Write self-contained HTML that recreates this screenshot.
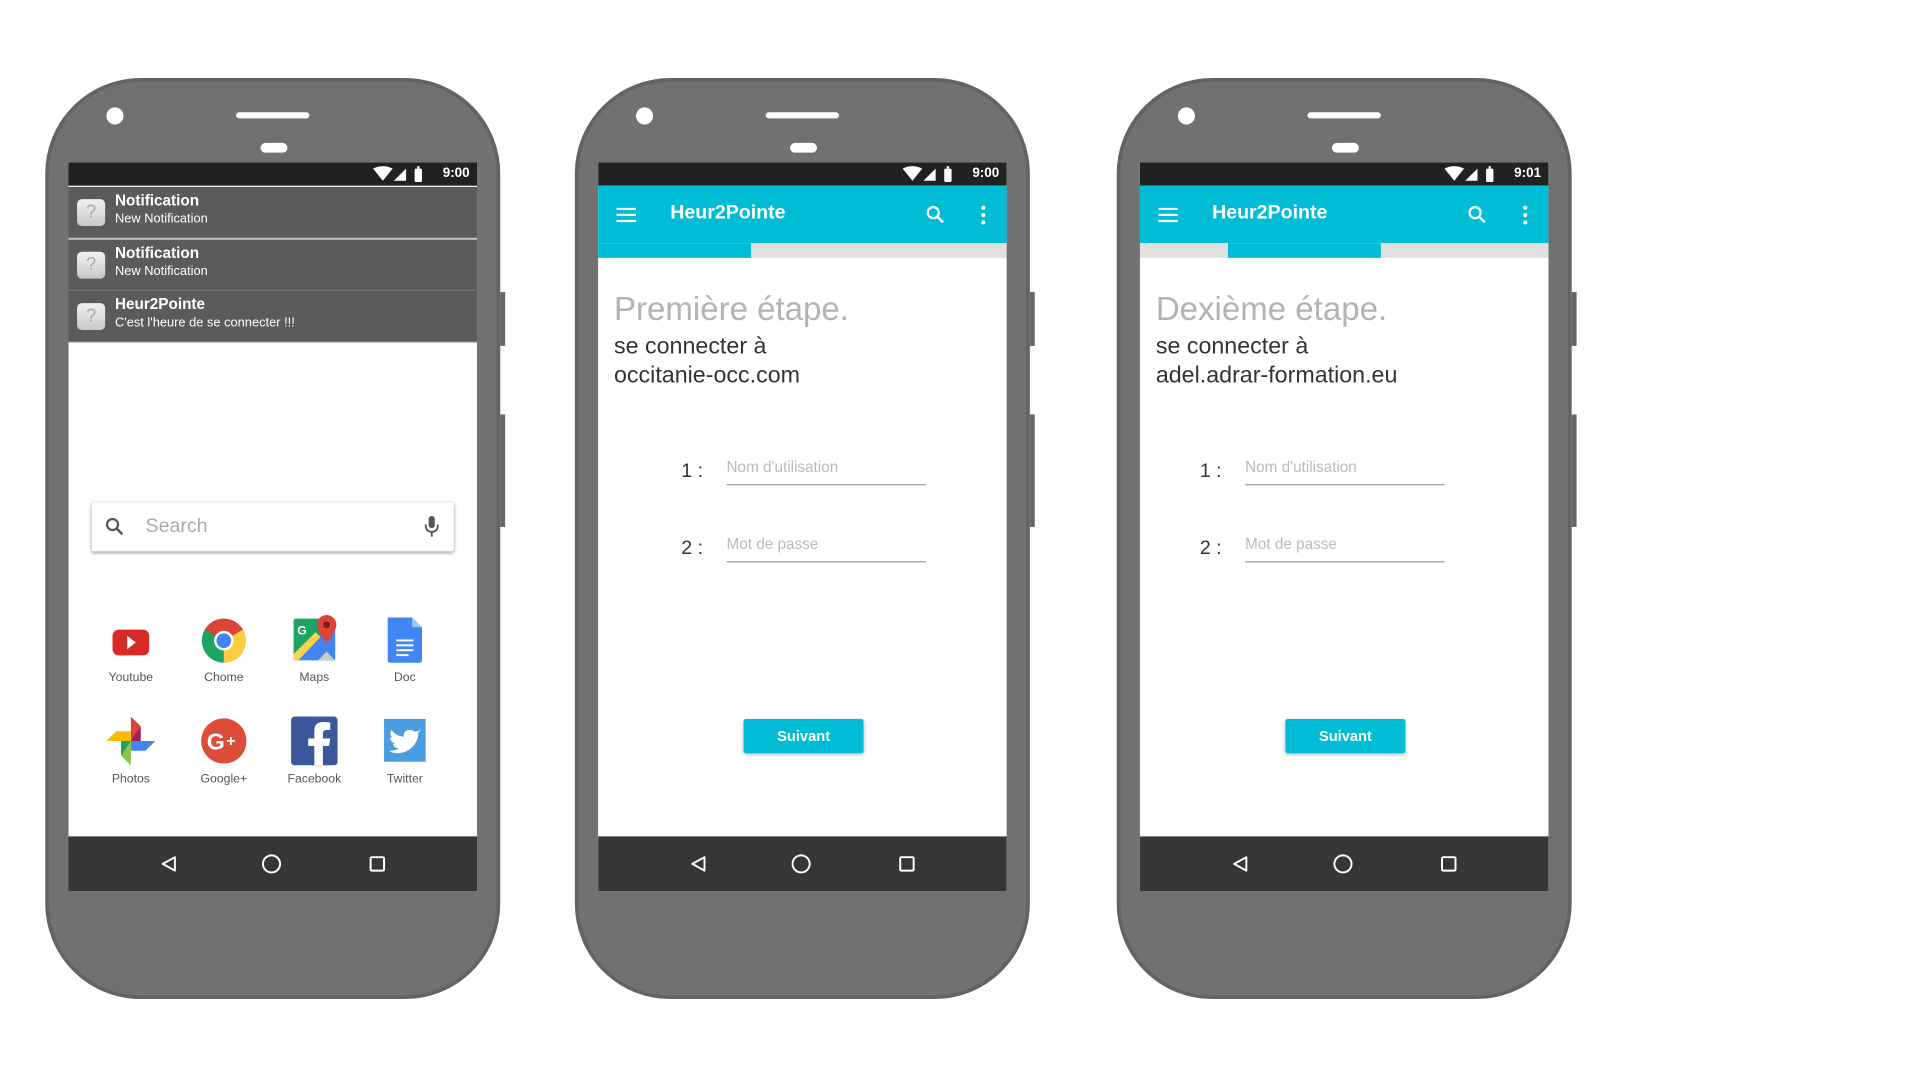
<!DOCTYPE html>
<html><head><meta charset="utf-8"><style>
*{margin:0;padding:0;box-sizing:border-box}
html,body{width:1920px;height:1080px;background:#fff;overflow:hidden;font-family:"Liberation Sans",sans-serif}
#w{position:absolute;left:0;top:1px;width:1570px;height:883px;transform:scale(1.2231);transform-origin:0 0}
.ph{position:absolute;top:63px;width:372px;height:753px;background:#717171;border:3px solid #636363;border-radius:78px}
.btn1,.btn2{position:absolute;left:369px;width:4px;background:#666}
.btn1{top:172px;height:44px}.btn2{top:272px;height:92px}
.cam{position:absolute;left:47px;top:21px;width:14px;height:14px;border-radius:50%;background:#fff}
.spk{position:absolute;left:153px;top:25px;width:60px;height:5px;border-radius:3px;background:#fff}
.pill{position:absolute;left:173px;top:50px;width:22px;height:8px;border-radius:4px;background:#fff}
.scr{position:absolute;left:16px;top:66px;width:334px;height:596px;background:#fff;overflow:hidden}
.sb{position:absolute;left:0;top:0;width:334px;height:19px;background:#212121;color:#fff;font-size:11px;font-weight:bold}
.sb .t{position:absolute;right:6px;top:3px}
.sb svg{position:absolute;right:35px;top:3px}
.nav{position:absolute;left:0;top:551px;width:334px;height:45px;background:#363636}
.nav svg{position:absolute;left:0;top:0}
.nt{position:absolute;left:0;width:334px;height:42px;background:#5b5b5b;border-bottom:1px solid #777;color:#fff}
.nt .ic{position:absolute;left:7px;top:10px;width:23px;height:22px;border-radius:4px;background:linear-gradient(#f2f2f2,#c8c8c8);color:#aaa;font-size:15px;text-align:center;line-height:22px}
.nt b{position:absolute;left:38px;top:4px;font-size:12.5px}
.nt span{position:absolute;left:38px;top:20px;font-size:10.5px}
.srch{position:absolute;left:19px;top:278px;width:296px;height:40px;background:#fff;border-radius:2px;box-shadow:0 1px 3px rgba(0,0,0,.4)}
.srch span{position:absolute;left:44px;top:11px;font-size:16px;color:#aaa}
.ap{position:absolute;width:70px;text-align:center;font-size:10px;color:#555}
.ap svg{display:block;margin:0 auto 6px}
.tb{position:absolute;left:0;top:19px;width:334px;height:47px;background:#00bcd4;color:#fff}
.tb b{position:absolute;left:59px;top:14px;font-size:16px}
.tab{position:absolute;top:66px;width:334px;height:12px;background:#e0e0e0}
.ind{position:absolute;top:0;width:125px;height:12px;background:#00bcd4}
.h1{position:absolute;left:13px;top:104px;font-size:27px;color:#b3b3b3;line-height:32px;white-space:nowrap}
.h2{position:absolute;left:13px;top:139px;font-size:19px;color:#333;line-height:24px;white-space:nowrap}
.lb{position:absolute;left:68px;font-size:16px;color:#333}
.in{position:absolute;left:105px;width:163px;height:1px;background:#999}
.ph2{position:absolute;left:105px;font-size:12.5px;color:#bbb}
.p3 .lb{left:49px}.p3 .in,.p3 .ph2{left:86px}
.sv{position:absolute;left:119px;top:455px;width:98px;height:28px;background:#00bcd4;color:#fff;font-weight:bold;font-size:12px;text-align:center;line-height:28px;border-radius:2px;box-shadow:0 1px 3px rgba(0,0,0,.3)}
</style></head><body><div id="w">

<!-- phone 1 -->
<div class="ph" style="left:37px">
<div class="btn1"></div><div class="btn2"></div>
<div class="cam"></div><div class="spk"></div><div class="pill"></div>
<div class="scr">
 <div class="sb"><svg width="50" height="13" viewBox="0 0 50 13"><path d="M0 2 Q8 -2 16 2 L8 12Z" fill="#fff"/><path d="M17 12 L27 2 L27 12Z" fill="#fff"/><rect x="34" y="2" width="6" height="11" rx="1" fill="#fff"/><rect x="36" y="0" width="2" height="2" fill="#fff"/></svg><span class="t">9:00</span></div>
 <div class="nt" style="top:20px"><div class="ic">?</div><b>Notification</b><span>New Notification</span></div>
 <div class="nt" style="top:63px"><div class="ic">?</div><b>Notification</b><span>New Notification</span></div>
 <div class="nt" style="top:105px"><div class="ic">?</div><b>Heur2Pointe</b><span>C'est l'heure de se connecter !!!</span></div>
 <div class="srch"><svg style="position:absolute;left:11px;top:12px" width="16" height="16" viewBox="0 0 16 16"><circle cx="6" cy="6" r="4.5" stroke="#555" stroke-width="1.8" fill="none"/><path d="M9.5 9.5 L14 14" stroke="#555" stroke-width="2"/></svg><span>Search</span><svg style="position:absolute;left:272px;top:11px" width="12" height="18" viewBox="0 0 12 18"><rect x="3.5" y="0" width="5" height="10" rx="2.5" fill="#555"/><path d="M1 7 Q1 13 6 13 Q11 13 11 7" stroke="#555" stroke-width="1.5" fill="none"/><rect x="5.2" y="13" width="1.6" height="4" fill="#555"/></svg></div>
 <div class="ap" style="left:16px;top:370px"><svg width="32" height="40" viewBox="0 0 32 40"><rect x="1" y="12" width="30" height="21" rx="5" fill="#d62b26"/><path d="M13 17 L20 22.5 L13 28Z" fill="#fff"/></svg>Youtube</div>
 <div class="ap" style="left:92px;top:370px"><svg width="38" height="40" viewBox="0 0 38 40"><circle cx="19" cy="21" r="18" fill="#1da462"/><path d="M19 21 L3.4 12 A18 18 0 0 1 34.6 12Z" fill="#db4437"/><path d="M19 21 L34.6 12 A18 18 0 0 1 19 39Z" fill="#ffcd40"/><circle cx="19" cy="21" r="8" fill="#fff"/><circle cx="19" cy="21" r="6" fill="#4285f4"/></svg>Chome</div>
 <div class="ap" style="left:166px;top:370px"><svg width="38" height="40" viewBox="0 0 38 40"><rect x="2" y="3" width="34" height="34" rx="2" fill="#1da462"/><path d="M2 37 L36 5 L36 37Z" fill="#4285f4"/><path d="M2 32 L20 14 L24 18 L6 37 L2 37Z" fill="#ffd04b"/><path d="M22 37 L29 30 L36 37Z" fill="#ccc"/><text x="5" y="16" font-size="10" font-weight="bold" fill="#fff" font-family="Liberation Sans">G</text><path d="M29 0 A8 8 0 0 1 37 8 C37 14 29 22 29 24 C29 22 21 14 21 8 A8 8 0 0 1 29 0Z" fill="#db4437"/><circle cx="29" cy="8" r="2.8" fill="#7a1d18"/></svg>Maps</div>
 <div class="ap" style="left:240px;top:370px"><svg width="34" height="40" viewBox="0 0 34 40"><path d="M3 2 H23 L31 10 V37 Q31 39 29 39 H5 Q3 39 3 37Z" fill="#4285f4"/><path d="M23 2 L31 10 H23Z" fill="#a1c2fa"/><rect x="10" y="20" width="14" height="1.6" fill="#fff"/><rect x="10" y="24" width="14" height="1.6" fill="#fff"/><rect x="10" y="28" width="14" height="1.6" fill="#fff"/><rect x="10" y="32" width="10" height="1.6" fill="#fff"/></svg>Doc</div>
 <div class="ap" style="left:16px;top:453px"><svg width="40" height="40" viewBox="0 0 40 40"><path d="M20 20 L20 0 L28 8 L28 20Z" fill="#db4437"/><path d="M20 20 L40 20 L32 28 L20 28Z" fill="#4285f4"/><path d="M20 20 L20 40 L12 32 L12 20Z" fill="#8bc34a"/><path d="M20 20 L0 20 L8 12 L20 12Z" fill="#fbbc05"/><path d="M20 20 L28 8 L28 20Z" fill="#a51c5a"/><path d="M20 20 L12 20 L12 32Z" fill="#1da462"/></svg>Photos</div>
 <div class="ap" style="left:92px;top:453px"><svg width="38" height="40" viewBox="0 0 38 40"><circle cx="19" cy="20" r="18.5" fill="#dd4b39"/><text x="5" y="27" font-size="19" font-weight="bold" fill="#fff" font-family="Liberation Sans">G</text><text x="21" y="24" font-size="13" font-weight="bold" fill="#fff" font-family="Liberation Sans">+</text></svg>Google+</div>
 <div class="ap" style="left:166px;top:453px"><svg width="40" height="40" viewBox="0 0 40 40"><rect x="1" y="0" width="38" height="40" rx="3" fill="#3b5998"/><path d="M27 40 V24 H32 L33 18 H27 V14 Q27 11 30 11 H33 V5 Q30 4.5 27 4.5 Q20 4.5 20 12 V18 H15 V24 H20 V40Z" fill="#fff"/></svg>Facebook</div>
 <div class="ap" style="left:240px;top:453px"><svg width="36" height="40" viewBox="0 0 36 40"><rect x="1" y="2" width="34" height="35" fill="#4a9ee0"/><path d="M28 12 Q30 12 31 10 Q30 13 29 13 C29 23 21 30 12 30 Q8 30 5 28 Q10 28 13 26 Q9 26 8 22 Q9 22.5 10 22 Q6 21 6 17 Q7 17.5 8 17.5 Q5 15 7 11 Q11 16 17 16.5 Q17 11 22 11 Q25 11 26 12.5Z" fill="#fff"/></svg>Twitter</div>
 <div class="nav"><svg width="334" height="45"><path d="M87 17 L77 22.5 L87 28Z" stroke="#fff" stroke-width="1.6" fill="none" stroke-linejoin="round"/><circle cx="166" cy="22.5" r="7" stroke="#fff" stroke-width="1.6" fill="none"/><rect x="247" y="17" width="11" height="11" rx="1" stroke="#fff" stroke-width="1.6" fill="none"/></svg></div>
</div></div>

<!-- phone 2 -->
<div class="ph" style="left:470px">
<div class="btn1"></div><div class="btn2"></div>
<div class="cam"></div><div class="spk"></div><div class="pill"></div>
<div class="scr">
 <div class="sb"><svg width="50" height="13" viewBox="0 0 50 13"><path d="M0 2 Q8 -2 16 2 L8 12Z" fill="#fff"/><path d="M17 12 L27 2 L27 12Z" fill="#fff"/><rect x="34" y="2" width="6" height="11" rx="1" fill="#fff"/><rect x="36" y="0" width="2" height="2" fill="#fff"/></svg><span class="t">9:00</span></div>
 <div class="tb"><svg style="position:absolute;left:15px;top:18px" width="16" height="12"><rect y="0" width="16" height="1.8" fill="#fff"/><rect y="5" width="16" height="1.8" fill="#fff"/><rect y="10" width="16" height="1.8" fill="#fff"/></svg><b>Heur2Pointe</b><svg style="position:absolute;left:268px;top:16px" width="16" height="16" viewBox="0 0 16 16"><circle cx="6" cy="6" r="4.5" stroke="#fff" stroke-width="1.8" fill="none"/><path d="M9.5 9.5 L14 14" stroke="#fff" stroke-width="2"/></svg><svg style="position:absolute;left:313px;top:16px" width="4" height="16"><circle cx="2" cy="2" r="1.7" fill="#fff"/><circle cx="2" cy="8" r="1.7" fill="#fff"/><circle cx="2" cy="14" r="1.7" fill="#fff"/></svg></div>
 <div class="tab"><div class="ind" style="left:0"></div></div>
 <div class="h1">Première étape.</div>
 <div class="h2">se connecter à<br>occitanie-occ.com</div>
 <div class="lb" style="top:244px">1 :</div><div class="ph2" style="top:242px">Nom d'utilisation</div><div class="in" style="top:263px"></div>
 <div class="lb" style="top:307px">2 :</div><div class="ph2" style="top:305px">Mot de passe</div><div class="in" style="top:326px"></div>
 <div class="sv">Suivant</div>
 <div class="nav"><svg width="334" height="45"><path d="M87 17 L77 22.5 L87 28Z" stroke="#fff" stroke-width="1.6" fill="none" stroke-linejoin="round"/><circle cx="166" cy="22.5" r="7" stroke="#fff" stroke-width="1.6" fill="none"/><rect x="247" y="17" width="11" height="11" rx="1" stroke="#fff" stroke-width="1.6" fill="none"/></svg></div>
</div></div>

<!-- phone 3 -->
<div class="ph p3" style="left:913px">
<div class="btn1"></div><div class="btn2"></div>
<div class="cam"></div><div class="spk"></div><div class="pill"></div>
<div class="scr">
 <div class="sb"><svg width="50" height="13" viewBox="0 0 50 13"><path d="M0 2 Q8 -2 16 2 L8 12Z" fill="#fff"/><path d="M17 12 L27 2 L27 12Z" fill="#fff"/><rect x="34" y="2" width="6" height="11" rx="1" fill="#fff"/><rect x="36" y="0" width="2" height="2" fill="#fff"/></svg><span class="t">9:01</span></div>
 <div class="tb"><svg style="position:absolute;left:15px;top:18px" width="16" height="12"><rect y="0" width="16" height="1.8" fill="#fff"/><rect y="5" width="16" height="1.8" fill="#fff"/><rect y="10" width="16" height="1.8" fill="#fff"/></svg><b>Heur2Pointe</b><svg style="position:absolute;left:268px;top:16px" width="16" height="16" viewBox="0 0 16 16"><circle cx="6" cy="6" r="4.5" stroke="#fff" stroke-width="1.8" fill="none"/><path d="M9.5 9.5 L14 14" stroke="#fff" stroke-width="2"/></svg><svg style="position:absolute;left:313px;top:16px" width="4" height="16"><circle cx="2" cy="2" r="1.7" fill="#fff"/><circle cx="2" cy="8" r="1.7" fill="#fff"/><circle cx="2" cy="14" r="1.7" fill="#fff"/></svg></div>
 <div class="tab"><div class="ind" style="left:72px"></div></div>
 <div class="h1">Dexième étape.</div>
 <div class="h2">se connecter à<br>adel.adrar-formation.eu</div>
 <div class="lb" style="top:244px">1 :</div><div class="ph2" style="top:242px">Nom d'utilisation</div><div class="in" style="top:263px"></div>
 <div class="lb" style="top:307px">2 :</div><div class="ph2" style="top:305px">Mot de passe</div><div class="in" style="top:326px"></div>
 <div class="sv">Suivant</div>
 <div class="nav"><svg width="334" height="45"><path d="M87 17 L77 22.5 L87 28Z" stroke="#fff" stroke-width="1.6" fill="none" stroke-linejoin="round"/><circle cx="166" cy="22.5" r="7" stroke="#fff" stroke-width="1.6" fill="none"/><rect x="247" y="17" width="11" height="11" rx="1" stroke="#fff" stroke-width="1.6" fill="none"/></svg></div>
</div></div>

</div></body></html>
